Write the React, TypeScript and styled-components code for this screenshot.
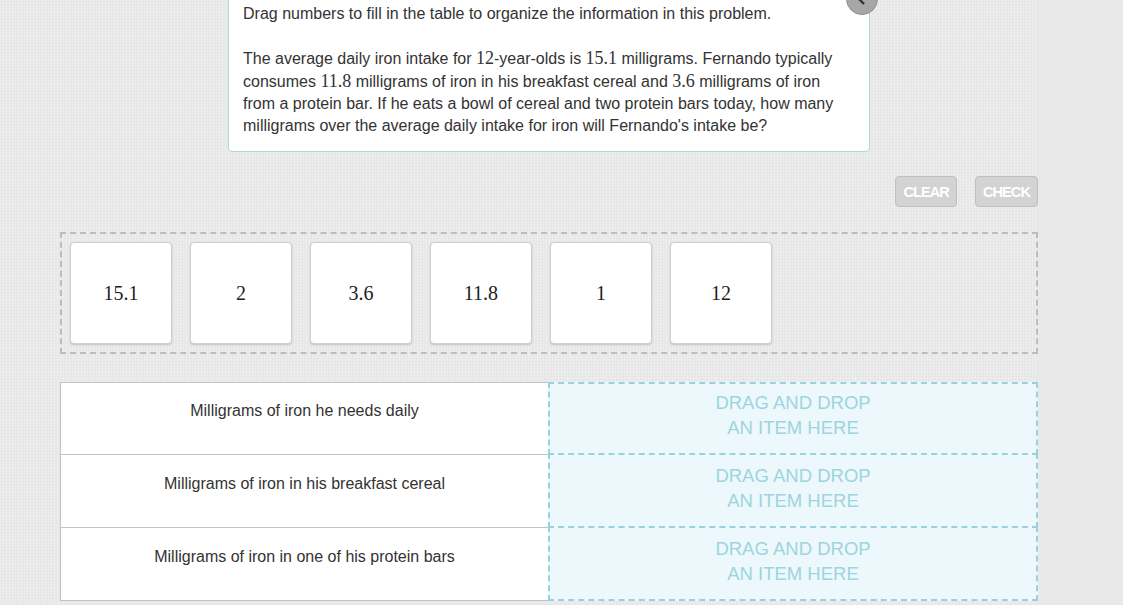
import React from "react";
import styled, { createGlobalStyle } from "styled-components";

const GlobalStyle = createGlobalStyle`
  html, body {
    margin: 0;
    padding: 0;
    background: #e9e9e9;
    font-family: "Liberation Sans", Arial, sans-serif;
    color: #333;
    overflow: hidden;
  }
`;

const numbers = ["15.1", "2", "3.6", "11.8", "1", "12"];
const rows = [
  "Milligrams of iron he needs daily",
  "Milligrams of iron in his breakfast cereal",
  "Milligrams of iron in one of his protein bars",
];

const Page = styled.div`
  display: flow-root;
  width: 978px;
  padding-left: 60px;
  height: 605px;
  background-color: #e9e9e9;
  background-image: repeating-linear-gradient(
      90deg,
      rgba(255, 255, 255, 0.25) 0 1px,
      transparent 1px 3px
    ),
    repeating-linear-gradient(
      0deg,
      rgba(0, 0, 0, 0.015) 0 1px,
      transparent 1px 3px
    );
`;

const Question = styled.div`
  position: relative;
  margin: -12px 0 0 168px;
  width: 612px;
  padding: 14px 14px 14px 14px;
  background: #fff;
  border: 1px solid #acd7e0;
  border-radius: 0 0 4px 4px;
  font-size: 16px;
  line-height: 22px;
  color: #333;
  p {
    margin: 0;
  }
  p + p {
    margin-top: 22px;
  }
`;

const Num = styled.span`
  font-family: "Liberation Serif", "DejaVu Serif", serif;
  font-size: 18px;
`;

const Badge = styled.div`
  position: absolute;
  right: -9px;
  top: -6px;
  width: 30px;
  height: 30px;
  border-radius: 50%;
  background: #a7a7a7;
  border: 1px solid #8f8f8f;
  display: flex;
  align-items: center;
  justify-content: center;
`;

const Toolbar = styled.div`
  display: flex;
  justify-content: flex-end;
  gap: 18px;
  margin-top: 24px;
`;

const Button = styled.button`
  height: 31px;
  padding: 0 7px;
  background: #d3d3d3;
  border: 1px solid #bfbfbf;
  border-radius: 4px;
  color: #fff;
  font-family: "Liberation Sans", Arial, sans-serif;
  font-weight: bold;
  font-size: 14.5px;
  letter-spacing: -0.9px;
  cursor: pointer;
`;

const Bank = styled.div`
  margin-top: 25px;
  height: 122px;
  box-sizing: border-box;
  border: 2px dashed #bdbdbd;
  padding: 8px;
  display: flex;
  gap: 18px;
`;

const Card = styled.div`
  width: 102px;
  height: 102px;
  box-sizing: border-box;
  background: #fff;
  border: 1px solid #cfcfcf;
  border-radius: 4px;
  box-shadow: 0 1px 2px rgba(0, 0, 0, 0.18);
  display: flex;
  align-items: center;
  justify-content: center;
  font-family: "Liberation Serif", "DejaVu Serif", serif;
  font-size: 20px;
  color: #222;
`;

const Table = styled.div`
  margin-top: 28px;
  display: grid;
  grid-template-columns: 488px 490px;
  grid-auto-rows: 73px;
`;

const Label = styled.div<{ $first: boolean }>`
  box-sizing: border-box;
  background: #fff;
  border: 1px solid #c3c3c3;
  border-top-width: ${(p) => (p.$first ? "1px" : "0")};
  border-right: 0;
  padding-top: ${(p) => (p.$first ? "17px" : "18px")};
  text-align: center;
  font-size: 16px;
  line-height: 22px;
  color: #333;
`;

const Drop = styled.div<{ $first: boolean }>`
  box-sizing: border-box;
  background: #ecf8fb;
  border: 2px dashed #9ad2db;
  margin-top: ${(p) => (p.$first ? "0" : "-2px")};
  height: ${(p) => (p.$first ? "73px" : "75px")};
  padding-top: ${(p) => (p.$first ? "6px" : "8px")};
  text-align: center;
  font-size: 18.5px;
  line-height: 25px;
  color: #9dd5de;
`;

export default function App() {
  return (
    <>
      <GlobalStyle />
      <Page>
        <Question>
          <Badge>
            <svg width="12" height="12" viewBox="0 0 12 12">
              <path d="M8 1 L3 6 L8 11" fill="none" stroke="#333" strokeWidth="2.4" />
            </svg>
          </Badge>
          <p>Drag numbers to fill in the table to organize the information in this problem.</p>
          <p>
            The average daily iron intake for <Num>12</Num>-year-olds is <Num>15.1</Num> milligrams.
            Fernando typically consumes <Num>11.8</Num> milligrams of iron in his breakfast cereal
            and <Num>3.6</Num> milligrams of iron from a protein bar. If he eats a bowl of cereal and
            two protein bars today, how many milligrams over the average daily intake for iron will
            Fernando's intake be?
          </p>
        </Question>
        <Toolbar>
          <Button>CLEAR</Button>
          <Button>CHECK</Button>
        </Toolbar>
        <Bank>
          {numbers.map((n) => (
            <Card key={n}>{n}</Card>
          ))}
        </Bank>
        <Table>
          {rows.map((r, i) => (
            <React.Fragment key={r}>
              <Label $first={i === 0}>{r}</Label>
              <Drop $first={i === 0}>
                DRAG AND DROP
                <br />
                AN ITEM HERE
              </Drop>
            </React.Fragment>
          ))}
        </Table>
      </Page>
    </>
  );
}
